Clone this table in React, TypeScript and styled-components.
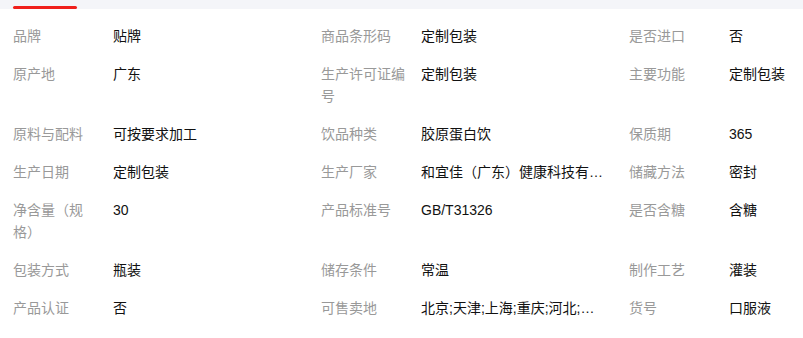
import styled, { createGlobalStyle } from "styled-components";

const GlobalStyle = createGlobalStyle`
  html, body {
    margin: 0;
    padding: 0;
    background: #ffffff;
  }
  body {
    font-family: "Liberation Sans", "Noto Sans CJK SC", sans-serif;
  }
`;

const ATTRS: [string, string][] = [
  ["品牌", "贴牌"],
  ["商品条形码", "定制包装"],
  ["是否进口", "否"],
  ["原产地", "广东"],
  ["生产许可证编号", "定制包装"],
  ["主要功能", "定制包装"],
  ["原料与配料", "可按要求加工"],
  ["饮品种类", "胶原蛋白饮"],
  ["保质期", "365"],
  ["生产日期", "定制包装"],
  ["生产厂家", "和宜佳（广东）健康科技有限公司"],
  ["储藏方法", "密封"],
  ["净含量（规格）", "30"],
  ["产品标准号", "GB/T31326"],
  ["是否含糖", "含糖"],
  ["包装方式", "瓶装"],
  ["储存条件", "常温"],
  ["制作工艺", "灌装"],
  ["产品认证", "否"],
  ["可售卖地", "北京;天津;上海;重庆;河北;山西;辽宁;吉林"],
  ["货号", "口服液"],
];

const App = () => {
  return (
    <Page>
      <GlobalStyle />
      <TabStrip>
        <TabIndicator />
      </TabStrip>
      <AttrGrid>
        {ATTRS.map(([label, value]) => (
          <AttrItem key={label}>
            <AttrLabel>{label}</AttrLabel>
            <AttrValue title={value}>{value}</AttrValue>
          </AttrItem>
        ))}
      </AttrGrid>
    </Page>
  );
};

export default App;

const Page = styled.div`
  width: 803px;
  min-height: 338px;
  background: #ffffff;
  overflow: hidden;
`;

const TabStrip = styled.div`
  height: 9px;
  background: #f4f5f9;
  padding-left: 13px;
  display: flex;
  align-items: flex-end;
`;

const TabIndicator = styled.div`
  width: 64px;
  height: 3px;
  border-radius: 2px;
  background: #f0201c;
`;

const AttrGrid = styled.div`
  display: grid;
  grid-template-columns: 308px 308px 1fr;
  row-gap: 16px;
  padding: 16px 0 0 13px;
`;

const AttrItem = styled.div`
  display: flex;
  align-items: flex-start;
  min-width: 0;
  font-size: 14px;
  line-height: 22px;
`;

const AttrLabel = styled.div`
  flex: 0 0 88px;
  margin-right: 12px;
  color: #999999;
  word-break: break-all;
`;

const AttrValue = styled.div`
  flex: 0 1 184px;
  min-width: 0;
  color: #111111;
  white-space: nowrap;
  overflow: hidden;
  text-overflow: ellipsis;
`;
